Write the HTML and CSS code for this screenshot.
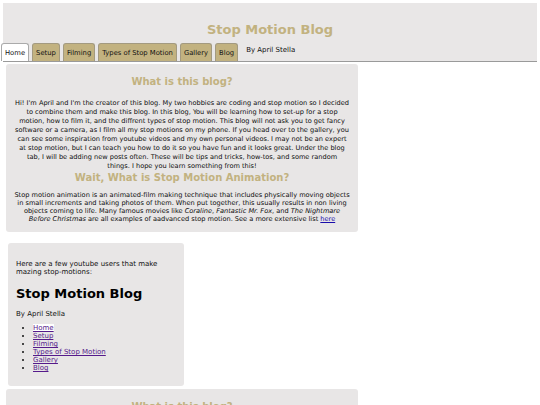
FILE: index.html
```html
<!DOCTYPE html>
<html>
<head>
<meta charset="utf-8">
<link rel="stylesheet" href="styles.css">
</head>
<body>
<header class="site-header">
  <h1 class="site-title">Stop Motion Blog</h1>
  <nav class="tabs">
    <a class="tab active" href="#">Home</a>
    <a class="tab" href="#">Setup</a>
    <a class="tab" href="#">Filming</a>
    <a class="tab" href="#">Types of Stop Motion</a>
    <a class="tab" href="#">Gallery</a>
    <a class="tab" href="#">Blog</a>
    <span class="byline">By April Stella</span>
  </nav>
</header>
<main class="main">
  <section class="card">
    <h2 class="card-title">What is this blog?</h2>
    <p class="card-text">Hi! I'm April and I'm the creator of this blog. My two hobbies are coding and stop motion so I decided<br>to combine them and make this blog. In this blog, You will be learning how to set-up for a stop<br>motion, how to film it, and the diffrent types of stop motion. This blog will not ask you to get fancy<br>software or a camera, as I film all my stop motions on my phone. If you head over to the gallery, you<br>can see some inspiration from youtube videos and my own personal videos. I may not be an expert<br>at stop motion, but I can teach you how to do it so you have fun and it looks great. Under the blog<br>tab, I will be adding new posts often. These will be tips and tricks, how-tos, and some random<br>things. I hope you learn something from this!</p>
    <h2 class="card-title second">Wait, What is Stop Motion Animation?</h2>
    <p class="card-text tight">Stop motion animation is an animated-film making technique that includes physically moving objects<br>in small increments and taking photos of them. When put together, this usually results in non living<br>objects coming to life. Many famous movies like <i>Coraline</i>, <i>Fantastic Mr. Fox</i>, and <i>The Nightmare<br>Before Christmas</i> are all examples of aadvanced stop motion. See a more extensive list <a href="#">here</a></p>
  </section>
  <aside class="side">
    <p class="side-text">Here are a few youtube users that make mazing stop-motions:</p>
    <h1 class="side-title">Stop Motion Blog</h1>
    <p class="side-by">By April Stella</p>
    <ul class="side-list">
      <li><a class="current" href="#">Home</a></li>
      <li><a href="#">Setup</a></li>
      <li><a href="#">Filming</a></li>
      <li><a href="#">Types of Stop Motion</a></li>
      <li><a href="#">Gallery</a></li>
      <li><a href="#">Blog</a></li>
    </ul>
  </aside>
  <section class="card">
    <h2 class="card-title">What is this blog?</h2>
    <p class="card-text">Hi! I'm April and I'm the creator of this blog.</p>
  </section>
</main>
</body>
</html>
```

FILE: styles.css
```css
html, body {
  margin: 0;
  padding: 0;
  background: #ffffff;
}
body {
  font-family: "DejaVu Sans", Verdana, sans-serif;
  font-size: 7px;
  color: #111;
  overflow: hidden;
  height: 405px;
}
.site-header {
  margin: 3px 3px 0 3px;
  background: #e9e7e7;
  border-bottom: 1px solid #9a9a9a;
  height: 58px;
  display: flex;
  flex-direction: column;
  justify-content: flex-end;
}
.site-title {
  margin: 0 0 5px 0;
  text-align: center;
  color: #c2b280;
  font-size: 13px;
  font-weight: bold;
  line-height: 16px;
}
.tabs {
  display: flex;
  align-items: flex-end;
  gap: 3px;
  margin-left: -2px;
  height: 18px;
}
.tab {
  display: block;
  height: 17px;
  line-height: 18px;
  padding: 0 3px;
  background: #c2b280;
  border: 1px solid #a39a80;
  border-bottom: none;
  border-radius: 3px 3px 0 0;
  color: #111;
  text-decoration: none;
  font-size: 6.8px;
}
.tab.active {
  background: #ffffff;
  border-color: #aaa;
}
.byline {
  margin-left: 5px;
  align-self: center;
  padding-bottom: 4px;
}
.main {
  padding: 2px 0 0 0;
}
.card {
  margin-left: 6px;
  width: 352px;
  background: #e8e6e6;
  border-radius: 3px;
  padding: 11px 2px 9px;
  box-sizing: border-box;
  text-align: center;
}
.card-title {
  margin: 0 0 11px;
  color: #c2b280;
  font-size: 10px;
  font-weight: bold;
  line-height: 13px;
}
.card-title.second {
  margin-top: 1px;
  margin-bottom: 7px;
  line-height: 12px;
}
.card-text {
  margin: 0;
  font-size: 6.6px;
  line-height: 9px;
  white-space: nowrap;
  color: #0c0c0c;
}
.card-text.tight {
  line-height: 8px;
}
.card-text a {
  color: #1a0dab;
}
.side {
  margin: 11px 0 3px 8px;
  width: 176px;
  background: #e8e6e6;
  border-radius: 3px;
  padding: 17px 8px 14px;
  box-sizing: border-box;
}
.side-text {
  margin: 0;
  line-height: 8px;
}
.side-title {
  margin: 10px 0 8px;
  font-size: 13px;
  line-height: 16px;
  color: #000;
}
.side-by {
  margin: 0 0 6px;
}
.side-list {
  margin: 0;
  padding-left: 17px;
  line-height: 8px;
}
.side-list a {
  color: #551a8b;
}
.side-list a.current {
  background: #fff;
}
```
